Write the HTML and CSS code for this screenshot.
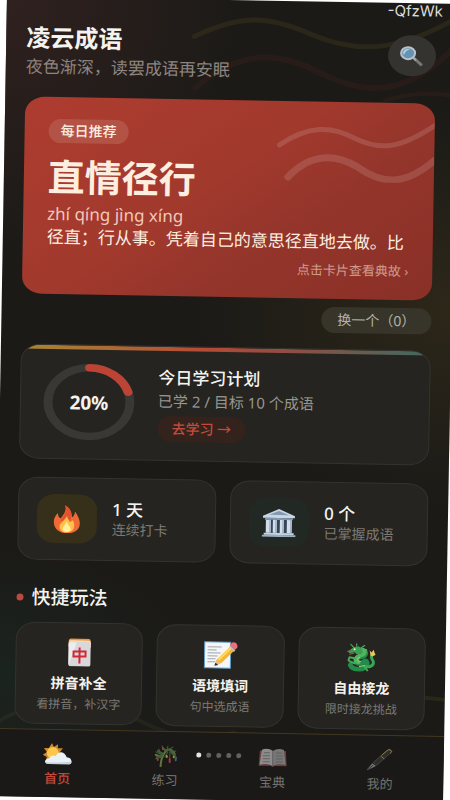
FILE: index.html
```html
<!DOCTYPE html>
<html lang="zh-CN">
<head>
<meta charset="utf-8">
<meta name="viewport" content="width=device-width, initial-scale=1">
<title>凌云成语</title>
<link rel="stylesheet" href="styles.css">
</head>
<body>
<div class="app">
  <svg class="backdrop" viewBox="0 0 450 800" preserveAspectRatio="none" fill="none" stroke-linecap="round" aria-hidden="true">
    <path d="M188 37 C235 14 262 15 305 33 C350 51 390 50 450 14" stroke="#8a7420" stroke-opacity=".14" stroke-width="5"/>
    <path d="M190 88 C235 50 270 50 312 70 C360 94 400 94 450 42" stroke="#8a2f26" stroke-opacity=".11" stroke-width="6"/>
    <path d="M380 98 C405 88 430 90 450 92" stroke="#8a2f26" stroke-opacity=".12" stroke-width="4"/>
    <path d="M0 728 C40 700 100 700 145 722 C180 740 210 742 240 732" stroke="#54602e" stroke-opacity=".15" stroke-width="4"/>
    <path d="M428 694 L450 696" stroke="#8a7420" stroke-opacity=".14" stroke-width="4"/>
  </svg>
  <span class="tag">-QfzWk</span>

  <main class="page">
    <header class="header">
      <div>
        <h1 class="brand">凌云成语</h1>
        <p class="greeting">夜色渐深，读罢成语再安眠</p>
      </div>
      <button class="search" type="button" aria-label="搜索">
        <svg width="26" height="22" viewBox="0 0 26 22" aria-hidden="true">
          <path d="M15 13 L23 20" stroke="#77777a" stroke-width="3"/>
          <path d="M14 12 L17 15" stroke="#a5a9ad" stroke-width="2"/>
          <ellipse cx="9" cy="8" rx="7" ry="6" fill="#6693b2" stroke="#b8c2c8" stroke-width="2"/>
          <path d="M4 8 C4 5 7 3 11 4 C8 5 6 6 5 10Z" fill="#b5d8e8"/>
        </svg>
      </button>
    </header>

    <a class="daily" href="#story">
      <svg class="daily-waves" viewBox="0 0 160 80" fill="none" stroke="#fff" stroke-opacity=".13" stroke-linecap="round" aria-hidden="true">
        <path d="M5 44 C34 24 56 24 80 36 C106 48 125 46 160 22" stroke-width="5"/>
        <path d="M14 76 C34 54 58 50 84 65 C112 84 134 80 160 57" stroke-width="7"/>
      </svg>
      <span class="daily-badge">每日推荐</span>
      <strong class="idiom">直情径行</strong>
      <span class="pinyin">zhí qíng jìng xíng</span>
      <span class="meaning">径直；行从事。凭着自己的意思径直地去做。比</span>
      <span class="hint">点击卡片查看典故 ›</span>
    </a>

    <button class="swap" type="button">换一个（0）</button>

    <section class="plan">
      <div class="ring">
        <svg width="92" height="77" viewBox="0 0 92 92" preserveAspectRatio="none" fill="none" stroke-width="9" aria-hidden="true">
          <circle cx="46" cy="46" r="41" stroke="#393835"/>
          <circle cx="46" cy="46" r="41" stroke="#bd4335" stroke-linecap="round" pathLength="100" stroke-dasharray="20 100" transform="rotate(-90 46 46)"/>
        </svg>
        <span class="percent">20%</span>
      </div>
      <div>
        <h2 class="plan-title">今日学习计划</h2>
        <p class="plan-note">已学 2 / 目标 10 个成语</p>
        <a class="study" href="#study">去学习 →</a>
      </div>
    </section>

    <section class="stats">
      <div class="stat">
        <span class="stat-icon stat-fire">
          <svg width="28" height="28" viewBox="0 0 28 28" aria-hidden="true">
            <path d="M12 0 C16 2 19 6 19 12 C21 11 22 8 22 6 C25 10 27 14 27 18 C27 25 21 28 14 28 C7 28 1 24 1 17 C1 12 4 9 5 8 C5 11 6 13 8 13 C10 10 14 6 12 0Z" fill="#ef6a35"/>
            <path d="M12 0 C18 4 19 8 18 14 L12 20 L8 15 C11 10 15 6 12 0Z" fill="#e4532d"/>
            <path d="M14 10 C14 13 16 14 17 17 L20 15 C22 19 22 22 20 25 C17 28 10 28 8 25 C5 21 8 18 11 15 C12 14 14 12 14 10Z" fill="#ffc04b"/>
            <path d="M14 16 C14 19 18 21 18 24 C17 28 10 27 10 24 C10 21 13 19 14 16Z" fill="#fff0a0"/>
          </svg>
        </span>
        <div>
          <strong class="stat-value">1 天</strong>
          <span class="stat-label">连续打卡</span>
        </div>
      </div>
      <div class="stat">
        <span class="stat-icon stat-hall">
          <svg width="34" height="28" viewBox="0 0 34 28" aria-hidden="true">
            <path d="M1 7 L17 0 L33 7 V9 H1Z" fill="#c8d6e5"/>
            <path d="M7 6 L17 2 L27 6Z" fill="#8299b0"/>
            <path d="M3 9 H31 V11 H3Z" fill="#8297ae"/>
            <path d="M5 11 H29 V24 H5Z" fill="#354656"/>
            <path d="M4 11h5v13H4z M11 11h4v13h-4z M18 11h4v13h-4z M25 11h5v13h-5z" fill="#d0ddea"/>
            <path d="M8 11v13 M14 11v13 M21 11v13 M29 11v13" stroke="#95a9bd"/>
            <path d="M2 24 H32 V26 H2Z" fill="#c4d2e1"/>
            <path d="M0 26 H34 V28 H0Z" fill="#9caebf"/>
          </svg>
        </span>
        <div>
          <strong class="stat-value">0 个</strong>
          <span class="stat-label">已掌握成语</span>
        </div>
      </div>
    </section>

    <h2 class="section-title">快捷玩法</h2>
    <section class="games">
      <a class="game" href="#pinyin">
        <svg width="34" height="28" viewBox="0 0 34 28" aria-hidden="true">
          <rect x="6" y="0" width="22" height="10" rx="3" fill="#e99a43"/>
          <rect x="6" y="2" width="22" height="8" rx="2" fill="#ffe2b7"/>
          <rect x="6" y="3" width="22" height="25" rx="2" fill="#d9d7da"/>
          <path d="M6 27 L14 4 H8 Q6 4 6 6Z" fill="#eeecee"/>
          <path d="M17 9 V25 M11 13 V19 M10 13 H24 M23 13 V19 M11 18 H23" fill="none" stroke="#cf2937" stroke-width="2"/>
        </svg>
        <strong class="game-title">拼音补全</strong>
        <span class="game-note">看拼音，补汉字</span>
      </a>
      <a class="game" href="#context">
        <svg width="34" height="28" viewBox="0 0 34 28" aria-hidden="true">
          <rect x="1" y="1" width="26" height="26" fill="#f4f6f8" stroke="#5e9dc9" stroke-width="1"/>
          <path d="M4 6h14M4 9h9M4 12h13M4 15h10M4 18h8M4 21h8" stroke="#a1a5aa"/>
          <path d="M13 19 L27 5 L31 9 L18 22 L12 24Z" fill="#f5b52e"/>
          <path d="M15 19 L28 6" stroke="#ffdb62" stroke-width="2"/>
          <path d="M26 5 L29 8 L31 10" fill="none" stroke="#b7c2c9" stroke-width="2"/>
          <path d="M26 4 L29 1 Q34 1 34 6 L31 9Z" fill="#ea707d"/>
          <path d="M13 19 L18 22 L11 25Z" fill="#e9bc84"/>
          <path d="M12 22 L15 24 L11 25Z" fill="#302e2b"/>
        </svg>
        <strong class="game-title">语境填词</strong>
        <span class="game-note">句中选成语</span>
      </a>
      <a class="game" href="#chain">
        <svg width="30" height="28" viewBox="0 0 30 28" fill="none" stroke-linecap="round" stroke-linejoin="round" aria-hidden="true">
          <path d="M14 7 C21 7 20 12 15 13 C8 14 8 20 13 20 C17 20 18 16 20 18 C22 21 19 25 13 26 C8 26 5 24 4 22" stroke="#258b49" stroke-width="5"/>
          <path d="M14 6 C20 6 19 11 14 12 C8 14 8 19 12 19" stroke="#50b55f" stroke-width="4"/>
          <path d="M19 23 C23 24 27 22 27 19 C27 16 24 16 25 12" stroke="#37a654" stroke-width="3"/>
          <path d="M3 7 L7 4 L12 3 L16 6 L15 10 L10 11 L8 9 L3 10 L1 8Z" fill="#3ca054"/>
          <path d="M7 4 L4 1 M10 3 L10 0 M15 4 L18 2 M18 7 L20 6" stroke="#5cb866" stroke-width="1"/>
          <path d="M23 7 L25 9 L27 6 L28 9 L29 11 L26 13 L24 12Z" fill="#e5c85d"/>
          <path d="M1 8 L4 8 M3 11 L7 10" stroke="#c9493a" stroke-width="1"/>
          <circle cx="8" cy="6" r="1" fill="#fff0a0"/>
          <path d="M8 15 L3 14 L2 17 M8 20 L3 18 M18 23 L21 27" stroke="#45a957" stroke-width="2"/>
          <path d="M13 14 C10 16 11 18 14 18 M13 23 L18 22" stroke="#a1d486" stroke-width="1"/>
        </svg>
        <strong class="game-title">自由接龙</strong>
        <span class="game-note">限时接龙挑战</span>
      </a>
    </section>
  </main>

  <nav class="tabs" aria-label="主导航">
    <a class="tab tab-active" href="#home">
      <svg width="30" height="22" viewBox="0 0 30 22" aria-hidden="true">
        <path d="M9 0 L11 4 L15 1 L15 5 L20 5 L17 9 L8 18 L3 18 L4 14 L0 12 L4 9 L1 5 L6 5Z" fill="#c98a2c"/>
        <circle cx="10" cy="10" r="6" fill="#ffc64b"/>
        <path d="M6 21 C1 21 1 16 7 15 C8 12 11 12 13 13 C15 7 22 8 24 14 C30 14 30 21 26 21Z" fill="#e9f1f6"/>
        <path d="M3 19 C10 20 22 19 29 18 C29 20 28 21 26 21 H6 C4 21 3 20 3 19Z" fill="#c3d3e0"/>
      </svg>
      <span>首页</span>
    </a>
    <a class="tab" href="#practice">
      <svg width="30" height="22" viewBox="0 0 30 22" fill="none" stroke-linecap="round" aria-hidden="true">
        <path d="M11 22 C11 15 12 10 17 5 C20 3 24 6 25 9 M12 12 L6 10" stroke="#64713f" stroke-width="2"/>
        <path d="M12 10 L6 7 M10 8 L9 4 M15 6 L12 1 M17 5 L18 1 M18 5 L23 2 M21 6 L26 6 M12 12 L6 14 M18 7 L15 12 M20 7 L20 13 M24 8 L27 13" stroke="#41603a" stroke-width="1"/>
        <path d="M8 6 L13 9 M14 4 L17 6 M7 12 L12 11 M20 5 L23 9" stroke="#41603a" stroke-width="2"/>
        <path d="M8 14v1 M20 14v3 M13 3v1" stroke="#a03a35" stroke-width="2"/>
        <path d="M17 11v1 M24 11v1" stroke="#a48d39" stroke-width="2"/>
        <path d="M26 13v2" stroke="#35657f" stroke-width="2"/>
      </svg>
      <span>练习</span>
    </a>
    <a class="tab" href="#library">
      <svg width="30" height="22" viewBox="0 0 30 22" aria-hidden="true">
        <path d="M2 4 H28 L29 19 H17 L15 20 L13 19 H1Z" fill="#713f43"/>
        <path d="M4 3 C8 1 12 2 15 4 V19 C11 17 6 17 2 18Z" fill="#8c8c8c"/>
        <path d="M26 3 C22 1 18 2 15 4 V19 C19 17 24 17 28 18Z" fill="#777"/>
        <path d="M15 4 V19 M6 6 L12 6 M5 9 H12 M5 12 H12 M5 15 H12 M18 6 H24 M18 9 H25 M18 12 H25 M18 15 H25" stroke="#606060"/>
      </svg>
      <span>宝典</span>
    </a>
    <a class="tab" href="#me">
      <svg width="30" height="22" viewBox="0 0 30 24" aria-hidden="true">
        <path d="M8 15 L24 1 Q27 0 28 3 L12 18Z" fill="#2c2c2a" stroke="#454441"/>
        <path d="M17 7 L24 1 Q27 0 28 3 L26 5" fill="none" stroke="#9b7d3c" stroke-width="1"/>
        <path d="M16 8 L20 11" stroke="#9b7d3c"/>
        <path d="M7 16 L11 19 L1 24 L2 22Z" fill="#777775"/>
        <path d="M2 23 L8 18" stroke="#282826"/>
      </svg>
      <span>我的</span>
    </a>
    <span class="dots" aria-hidden="true"><i class="dot dot-on"></i><i class="dot"></i><i class="dot"></i><i class="dot"></i><i class="dot"></i></span>
  </nav>
</div>
</body>
</html>
```
FILE: styles.css
```css
* { box-sizing: border-box; }

html { overflow: hidden; background: #fff; }

body {
  margin: 0;
  color: #f5f3ef;
  font-family: "Noto Sans", "Noto Sans CJK SC", sans-serif;
  font-size: 14px;
}

h1, h2, p { margin: 0; }
a { color: inherit; text-decoration: none; }
button { border: 0; padding: 0; color: inherit; font: inherit; }
svg { display: block; }

.app {
  position: relative;
  display: flex;
  flex-direction: column;
  min-height: 100vh;
  overflow: hidden;
  transform: rotate(1deg);
  background:
    radial-gradient(ellipse 240px 260px at 0 0, #30211f, transparent),
    radial-gradient(ellipse 260px 200px at 100% 38%, #2d2719, transparent),
    radial-gradient(ellipse 200px 130px at 0 85%, #1b2420, transparent),
    #1b1a17;
}

.backdrop {
  position: absolute;
  inset: 0;
  width: 100%;
  height: 100%;
}

.tag {
  position: absolute;
  top: 0;
  right: 14px;
  color: #dededb;
  font: 15px/15px Inter, sans-serif;
}

.page {
  position: relative;
  display: flex;
  flex-direction: column;
  padding: 26px 20px 5px;
}

.header {
  display: flex;
  justify-content: space-between;
  align-items: flex-start;
  margin-bottom: 18px;
}

.brand { font-size: 24px; line-height: 30px; font-weight: 700; }

.greeting {
  margin-top: 2px;
  color: #8e8580;
  font-size: 17px;
  line-height: 24px;
}

.search {
  display: grid;
  place-items: center;
  width: 48px;
  height: 41px;
  margin-top: 6px;
  border-radius: 50%;
  background: #353330;
}

.daily {
  position: relative;
  display: flex;
  flex-direction: column;
  align-items: flex-start;
  padding: 22px 24px 19px;
  overflow: hidden;
  border-radius: 20px / 17px;
  background: linear-gradient(145deg, #ae3c30, #a1392d 45%, #94352b 65%, #8a3027);
  color: #fdeee0;
}

.daily-waves { position: absolute; top: 0; right: 0; width: 160px; height: 80px; }

.daily-badge {
  padding: 0 12px;
  border-radius: 12px;
  background: #b35345;
  font-size: 14px;
  line-height: 24px;
  font-weight: 500;
}

.idiom { margin-top: 11px; font-size: 37px; line-height: 46px; font-weight: 700; }
.pinyin { margin-top: 2px; color: #efc8bb; font-size: 17px; line-height: 23px; }
.meaning { font-size: 17px; line-height: 24px; white-space: nowrap; }

.hint {
  align-self: flex-end;
  margin-top: 6px;
  color: #d09c8e;
  font-size: 13px;
  line-height: 20px;
}

.swap {
  align-self: flex-end;
  margin: 8px 0 16px;
  padding: 0 16px;
  border-radius: 13px;
  background: #37352a;
  color: #b5b3aa;
  font-size: 14px;
  line-height: 26px;
}

.plan, .stat, .game {
  border: 1px solid #34332f;
  border-radius: 20px / 17px;
  background: #252420;
}

.plan {
  position: relative;
  display: flex;
  align-items: center;
  gap: 23px;
  padding: 18px 22px;
  overflow: hidden;
}

.plan::before {
  content: "";
  position: absolute;
  inset: 0 0 auto;
  height: 4px;
  background: linear-gradient(90deg, #a88632, #b64a36 45%, #9c4a3e 60%, #3f6a60);
}

.ring { display: grid; place-items: center; }
.ring > * { grid-area: 1 / 1; }
.percent { font-size: 19px; line-height: 24px; font-weight: 700; }
.plan-title { font-size: 17px; line-height: 24px; font-weight: 500; }
.plan-note { margin-bottom: 4px; color: #98968f; font-size: 15px; line-height: 22px; }

.study {
  display: inline-block;
  padding: 0 14px;
  border-radius: 13px;
  background: #33231c;
  color: #c44b3b;
  line-height: 26px;
  font-weight: 500;
}

.stats {
  display: grid;
  grid-template-columns: 1fr 1fr;
  gap: 14px;
  margin: 18px 0 23px;
}

.stat {
  display: flex;
  align-items: center;
  gap: 15px;
  padding: 16px 18px;
}

.stat-icon {
  display: grid;
  place-items: center;
  flex: none;
  width: 60px;
  height: 49px;
  border-radius: 18px / 15px;
}

.stat-fire { background: #362f19; }
.stat-hall { background: #222925; }
.stat-value { display: block; font-size: 17px; line-height: 20px; font-weight: 500; }
.stat-label { color: #7c7972; line-height: 18px; white-space: nowrap; }

.section-title {
  display: flex;
  align-items: center;
  gap: 8px;
  margin-bottom: 11px;
  font-size: 19px;
  line-height: 28px;
  font-weight: 500;
}

.section-title::before {
  content: "";
  width: 7px;
  height: 7px;
  border-radius: 50%;
  background: #b94a3d;
}

.games {
  display: grid;
  grid-template-columns: repeat(3, 1fr);
  gap: 14px;
}

.game {
  display: flex;
  flex-direction: column;
  align-items: center;
  padding: 15px 4px 9px;
}

.game-title { margin-top: 6px; font-size: 14px; line-height: 22px; font-weight: 700; }
.game-note { color: #7c7972; font-size: 12px; line-height: 20px; }

.tabs {
  position: relative;
  display: flex;
  flex: 1;
  padding: 13px 10px 9px;
  border-top: 1px solid #443820;
  background: #1a1917;
}

.tab {
  display: flex;
  flex: 1;
  flex-direction: column;
  align-items: center;
  justify-content: space-between;
  color: #74726d;
  font-size: 13px;
  line-height: 20px;
}

.tab-active { color: #c44b3b; font-weight: 500; }

.dots {
  position: absolute;
  top: 20px;
  left: 50%;
  display: flex;
  gap: 5px;
  transform: translateX(-50%);
}

.dot { width: 5px; height: 5px; border-radius: 50%; background: #63625f; }
.dot-on { background: #e6e5e2; }
```
